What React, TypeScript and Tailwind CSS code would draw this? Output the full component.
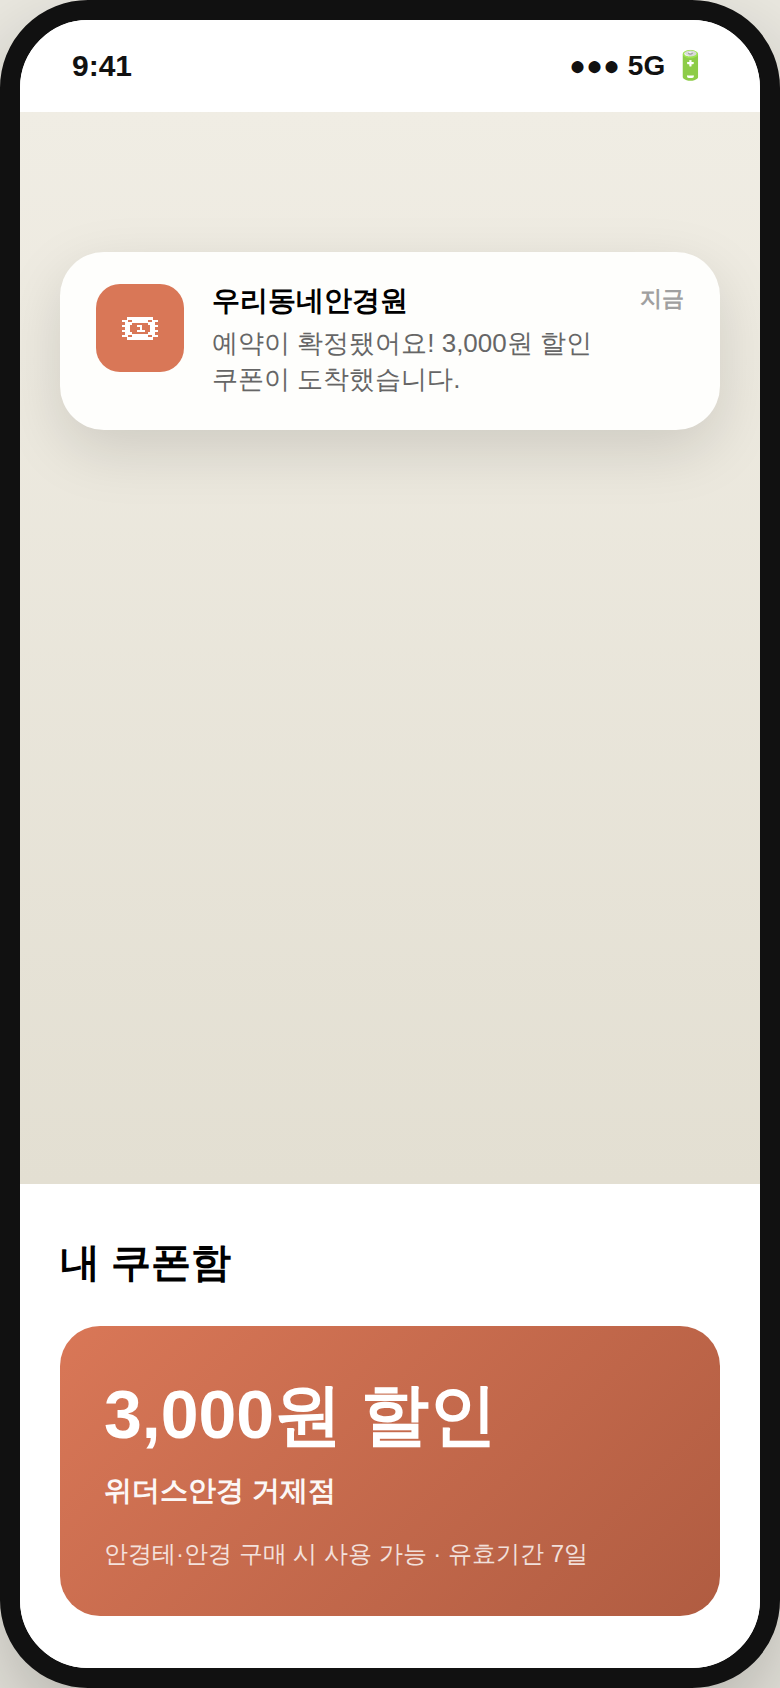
const coupon = {
  title: "3,000원 할인",
  store: "위더스안경 거제점",
  condition: "안경테·안경 구매 시 사용 가능 · 유효기간 7일",
};

const TicketIcon = () => {
  return (
    <svg className="h-[23px] w-9" viewBox="0 0 36 23" aria-hidden="true">
      <path
        fill="#fff"
        fillRule="evenodd"
        d="M5 0H31V3H36V5H33V8H36V10H33V13H36V15H33V18H36V20H31V23H5V20H0V18H3V15H0V13H3V10H0V8H3V5H0V3H5ZM10 6V8H8V15H10V17H26V15H28V8H26V6Z"
      />
      <path
        fill="#d97757"
        d="M6 3H10V5H6ZM26 3H30V5H26ZM6 18H10V20H6ZM26 18H30V20H26Z"
      />
      <path fill="#fff" d="M15 8H20V13H23V15H15V13H18V10H15Z" />
    </svg>
  );
};

const StatusBar = () => {
  return (
    <header className="flex h-[92px] shrink-0 items-center justify-between bg-white px-[52px] leading-8 font-bold text-[#111]">
      <span className="text-[30px]">9:41</span>
      <span className="text-[28px]">●●● 5G 🔋</span>
    </header>
  );
};

const Notification = () => {
  return (
    <article className="flex items-start gap-7 rounded-[44px] bg-[#fefefc] px-9 pt-8 pb-[33px] shadow-[0_20px_60px_rgba(0,0,0,0.13)]">
      <div className="flex size-[88px] shrink-0 items-center justify-center rounded-3xl bg-[#d97757]">
        <TicketIcon />
      </div>
      <div className="min-w-0 flex-1">
        <h2 className="text-[28px] leading-[34px] font-bold text-black">우리동네안경원</h2>
        <p className="mt-[7px] text-[26px] leading-9 text-[#666]">
          예약이 확정됐어요! 3,000원 할인
          <br />
          쿠폰이 도착했습니다.
        </p>
      </div>
      <time className="text-[22px] leading-[30px] font-bold text-[#a0a0a0]">지금</time>
    </article>
  );
};

const CouponBox = () => {
  return (
    <section className="shrink-0 bg-white px-10 py-[52px]">
      <h2 className="text-[40px] leading-[52px] font-bold text-black">내 쿠폰함</h2>
      <article className="mt-[38px] rounded-[40px] bg-linear-135 from-[#d97757] to-[#b05c41] p-11 text-white">
        <h3 className="text-[68px] leading-[88px] font-bold">{coupon.title}</h3>
        <p className="mt-3.5 text-[28px] leading-[38px] font-bold opacity-95">{coupon.store}</p>
        <p className="mt-[26px] text-[24px] leading-9 opacity-80">{coupon.condition}</p>
      </article>
    </section>
  );
};

const App = () => {
  return (
    <div className="min-h-screen overflow-hidden bg-[#ebe9e1] font-['Liberation_Sans',sans-serif]">
      <div className="flex min-h-screen flex-col overflow-hidden rounded-[88px] border-20 border-[#111] bg-white shadow-[0_40px_100px_rgba(0,0,0,0.25)]">
        <StatusBar />
        <main className="flex flex-1 flex-col bg-linear-to-b from-[#f0ede4] to-[#e3dfd2] px-10 pt-[140px]">
          <Notification />
        </main>
        <CouponBox />
      </div>
    </div>
  );
};

export default App;
